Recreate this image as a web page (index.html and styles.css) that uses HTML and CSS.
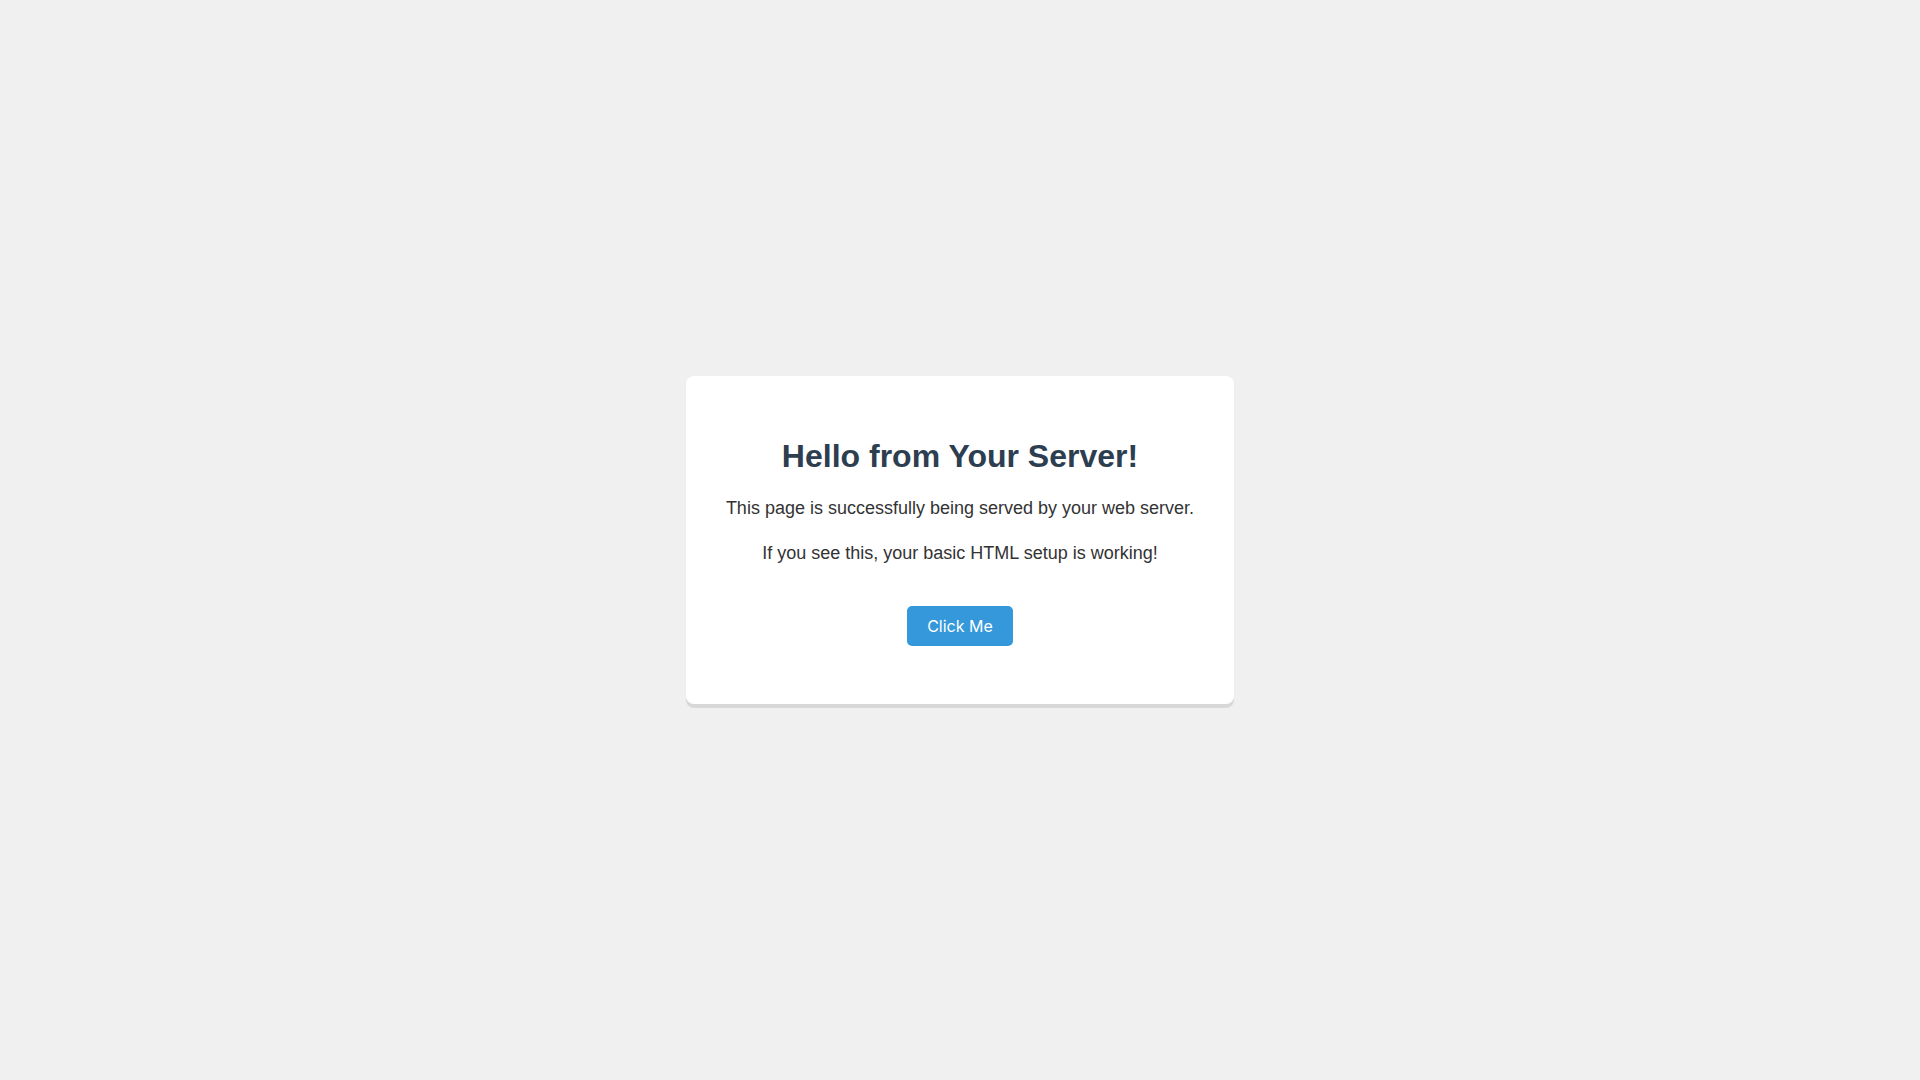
FILE: index.html
```html
<!DOCTYPE html>
<html lang="en">
<head>
    <meta charset="UTF-8">
    <meta name="viewport" content="width=device-width, initial-scale=1.0">
    <title>Hello from Your Server</title>
    <link rel="stylesheet" href="styles.css">
</head>
<body>
    <div class="card">
        <h1>Hello from Your Server!</h1>
        <p>This page is successfully being served by your web server.</p>
        <p>If you see this, your basic HTML setup is working!</p>
        <!-- Simple test button -->
        <div class="actions">
            <button id="clickBtn">Click Me</button>
        </div>
    </div>
</body>
</html>
```

FILE: styles.css
```css
body {
    font-family: "Liberation Sans", Arial, sans-serif;
    background-color: #f0f0f0;
    margin: 0;
    padding: 0;
    min-height: 100vh;
    display: flex;
    align-items: center;
    justify-content: center;
}

.card {
    background-color: #ffffff;
    padding: 40px;
    border-radius: 8px;
    box-shadow: 0 4px 1px rgba(0, 0, 0, 0.1);
    text-align: center;
}

h1 {
    color: #2c3e50;
    font-size: 32px;
    line-height: normal;
    margin: 22px 0 20px;
}

p {
    color: #333333;
    font-size: 18px;
    line-height: 1.5;
    margin: 18px 0;
}

.actions {
    display: flex;
    justify-content: center;
    margin: 39px 0 18px;
}

button {
    font-family: Inter, sans-serif;
    font-size: 16px;
    background-color: #3498db;
    color: #ffffff;
    border: none;
    border-radius: 5px;
    padding: 10px 20px;
    cursor: pointer;
    transition: background-color 0.3s;
}

button:hover {
    background-color: #2980b9;
}
```
